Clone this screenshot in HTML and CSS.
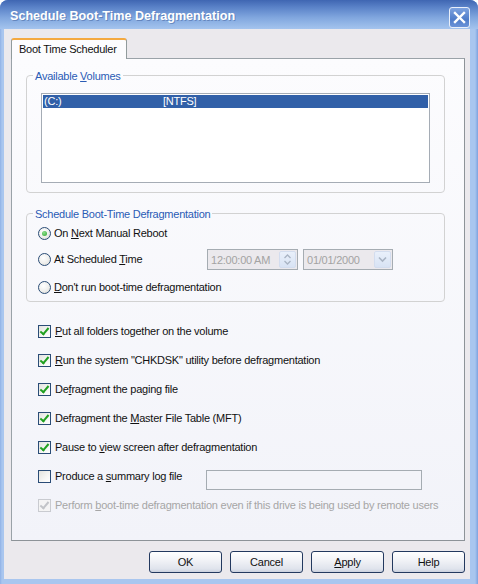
FILE: index.html
```html
<!DOCTYPE html>
<html>
<head>
<meta charset="utf-8">
<title>Schedule Boot-Time Defragmentation</title>
<link rel="stylesheet" href="styles.css">
</head>
<body>
<div class="window">
  <div class="titlebar">
    <span class="title">Schedule Boot-Time Defragmentation</span>
    <div class="close" aria-label="Close">
      <svg width="13" height="13" viewBox="0 0 13 13"><path d="M2 2 L11 11 M11 2 L2 11" stroke="#fff" stroke-width="2.4" stroke-linecap="square" fill="none"/></svg>
    </div>
  </div>
  <div class="frame">
    <div class="client">
      <div class="tabs">
        <div class="tab active">Boot Time Scheduler</div>
      </div>
      <div class="panel">
        <fieldset class="group vol">
          <legend>Available <u>V</u>olumes</legend>
          <div class="group-body vol-body">
            <div class="listbox">
              <div class="lrow selected"><span class="col1">(C:)</span><span>[NTFS]</span></div>
            </div>
          </div>
        </fieldset>

        <fieldset class="group sched">
          <legend>Schedule Boot-Time Defragmentation</legend>
          <div class="group-body sched-body">
            <div class="opt r1">
              <span class="radio checked"></span>
              <span class="lbl">On <u>N</u>ext Manual Reboot</span>
            </div>
            <div class="opt r2">
              <span class="radio"></span>
              <span class="lbl fixed">At Scheduled <u>T</u>ime</span>
              <div class="field time">
                <span class="ftext">12:00:00 AM</span>
                <span class="spin">
                  <svg width="9" height="13" viewBox="0 0 9 13"><path d="M1.5 5 L4.5 2 L7.5 5" stroke="#a9b4c4" stroke-width="1.3" fill="none"/><path d="M1.5 8 L4.5 11 L7.5 8" stroke="#a9b4c4" stroke-width="1.3" fill="none"/></svg>
                </span>
              </div>
              <div class="field date">
                <span class="ftext">01/01/2000</span>
                <span class="drop">
                  <svg width="9" height="7" viewBox="0 0 9 7"><path d="M1 1.5 L4.5 5 L8 1.5" stroke="#a9b4c4" stroke-width="1.6" fill="none"/></svg>
                </span>
              </div>
            </div>
            <div class="opt r3">
              <span class="radio"></span>
              <span class="lbl"><u>D</u>on't run boot-time defragmentation</span>
            </div>
          </div>
        </fieldset>

        <div class="checks">
          <div class="chk"><span class="box on"></span><span class="lbl"><u>P</u>ut all folders together on the volume</span></div>
          <div class="chk"><span class="box on"></span><span class="lbl"><u>R</u>un the system "CHKDSK" utility before defragmentation</span></div>
          <div class="chk"><span class="box on"></span><span class="lbl">De<u>f</u>ragment the paging file</span></div>
          <div class="chk"><span class="box on"></span><span class="lbl">Defragment the <u>M</u>aster File Table (MFT)</span></div>
          <div class="chk"><span class="box on"></span><span class="lbl">Pause to <u>v</u>iew screen after defragmentation</span></div>
          <div class="chk"><span class="box"></span><span class="lbl fixed2">Produce a <u>s</u>ummary log file</span><div class="logfield"></div></div>
          <div class="chk disabled"><span class="box on"></span><span class="lbl">Perform <u>b</u>oot-time defragmentation even if this drive is being used by remote users</span></div>
        </div>
      </div>
      <div class="buttons">
        <div class="btn">OK</div>
        <div class="btn">Cancel</div>
        <div class="btn"><u>A</u>pply</div>
        <div class="btn">Help</div>
      </div>
    </div>
  </div>
</div>
</body>
</html>
```

FILE: styles.css
```css
* { box-sizing: border-box; }
html, body { margin: 0; padding: 0; }
body {
  width: 478px;
  height: 584px;
  overflow: hidden;
  background: #ffffff;
  font-family: "Liberation Sans", Arial, sans-serif;
  font-size: 11px;
  letter-spacing: -0.24px;
  color: #111;
}
u { text-decoration: underline; text-underline-offset: 1px; }

.window {
  width: 478px;
  height: 584px;
  display: flex;
  flex-direction: column;
  border-radius: 8px 8px 0 0;
  background: #8fb1e6;
  box-shadow: inset 0 0 0 1px #6a8fd0;
  overflow: hidden;
}

.titlebar {
  height: 29px;
  flex: none;
  display: flex;
  align-items: center;
  justify-content: space-between;
  padding: 0 8px 0 10px;
  background: linear-gradient(to bottom, #3f66b2 0%, #5a82c8 25%, #80a6de 60%, #a4c4ee 100%);
  border-radius: 7px 7px 0 0;
}
.title {
  color: #fff;
  font-weight: bold;
  font-size: 12.6px;
  letter-spacing: 0;
  text-shadow: 1px 1px 0 rgba(30, 60, 120, 0.35);
  margin-top: 2px;
}
.close {
  width: 21px;
  height: 21px;
  margin-top: 5px;
  border: 1px solid #e9effa;
  border-radius: 3px;
  background: linear-gradient(to bottom, #7ea3e0, #4f7cc9 60%, #6b93d8);
  display: flex;
  align-items: center;
  justify-content: center;
}

.frame {
  flex: 1;
  display: flex;
  padding: 0 8px 5px 4px;
  background: linear-gradient(to right, #8fb1e6 0, #a9c6ef 2px, #a9c6ef calc(100% - 3px), #7ea2de 100%);
}
.client {
  flex: 1;
  background: #ebe9ed;
  padding: 9px 5px 0 7px;
  display: flex;
  flex-direction: column;
}

.tabs { display: flex; height: 20px; position: relative; z-index: 1; }
.tab {
  width: 116px;
  height: 21px;
  border: 1px solid #919b9c;
  border-bottom: none;
  border-top: 2px solid #f4a93f;
  border-radius: 3px 3px 0 0;
  background: #fcfcfe;
  padding: 3px 0 0 7px;
  line-height: 13px;
  white-space: nowrap;
}

.panel {
  width: 454px;
  height: 483px;
  border: 1px solid #9aa2a8;
  border-right-color: #8d9398;
  border-bottom-color: #8d9398;
  background: linear-gradient(to bottom, #fcfcfe, #f2f3f9);
  padding: 8px 0 0 14px;
  display: flex;
  flex-direction: column;
  align-items: flex-start;
}

.group {
  margin: 0;
  padding: 0;
  width: 419px;
  border: 1px solid #d2d2d2;
  border-radius: 4px;
  min-inline-size: 0;
}
.group legend {
  padding: 3px 2px 0 2px;
  margin-left: 6px;
  color: #2a5bb5;
  line-height: 13px;
  font-size: 11px;
}
.vol-body { padding: 10px 14px 9px 14px; }
.listbox {
  height: 90px;
  border: 1px solid #a5acb5;
  background: #fff;
  padding: 1px;
}
.lrow { height: 13px; line-height: 13px; display: flex; padding-left: 1px; }
.lrow.selected { background: #3160a8; color: #fff; }
.col1 { width: 119px; }

.sched { margin-top: 12px; }
.sched-body { padding: 3px 10px 5px 11px; display: flex; flex-direction: column; }
.opt { display: flex; align-items: center; }
.r1 { height: 18px; }
.r2 { height: 21px; margin-top: 7px; }
.r3 { height: 18px; margin-top: 8px; }
.radio {
  width: 13px;
  height: 13px;
  border-radius: 50%;
  border: 1px solid #2a4c76;
  background: radial-gradient(circle at 40% 35%, #ffffff 0%, #f0f0ee 50%, #d8d8d2 100%);
  flex: none;
  display: flex;
  align-items: center;
  justify-content: center;
}
.radio.checked::after {
  content: "";
  width: 5px;
  height: 5px;
  border-radius: 50%;
  background: radial-gradient(circle at 40% 35%, #8de08d, #2fa52f);
}
.opt .lbl { margin-left: 3px; line-height: 13px; white-space: nowrap; }
.opt .lbl.fixed { width: 153px; flex: none; }

.field {
  height: 21px;
  border: 1px solid #a5acb2;
  background: #ebe9ed;
  display: flex;
  align-items: center;
  justify-content: space-between;
  color: #a3a3a3;
  padding: 0 1px 0 3px;
}
.field.time { width: 91px; }
.field.date { width: 90px; margin-left: 5px; }
.spin, .drop {
  width: 17px;
  height: 17px;
  background: linear-gradient(to bottom, #e9f0fb, #d8e3f4);
  border: 1px solid #d3ddef;
  border-radius: 2px;
  display: flex;
  align-items: center;
  justify-content: center;
}

.checks { margin-top: 15px; padding-left: 12px; display: flex; flex-direction: column; }
.chk { height: 29px; display: flex; align-items: center; }
.box {
  width: 13px;
  height: 13px;
  border: 1px solid #2a4c76;
  background: linear-gradient(135deg, #e3e3de 0%, #f6f6f4 60%, #ffffff 100%);
  flex: none;
  position: relative;
}
.box.on::after {
  content: "";
  position: absolute;
  left: 2px;
  top: 0px;
  width: 3px;
  height: 7px;
  border: solid #21a121;
  border-width: 0 2px 2px 0;
  transform: translate(1px, 0) rotate(40deg);
}
.chk .lbl { margin-left: 4px; line-height: 13px; white-space: nowrap; }
.chk .lbl.fixed2 { width: 151px; flex: none; }
.logfield {
  width: 216px;
  height: 20px;
  margin-top: 6px;
  border: 1px solid #a5acb2;
  background: #f3f4f9;
}
.chk.disabled { color: #a6a6a6; }
.chk.disabled .box { border-color: #c9cbd0; background: #f4f4f4; }
.chk.disabled .box.on::after { border-color: #c2c4c8; }

.buttons {
  width: 454px;
  margin-top: 10px;
  display: flex;
  justify-content: flex-end;
  gap: 8px;
}
.btn {
  width: 73px;
  height: 22px;
  border: 1px solid #23395f;
  border-radius: 3px;
  background: linear-gradient(to bottom, #ffffff 0%, #f2f3f7 40%, #dfe3ec 85%, #c9d0de 100%);
  display: flex;
  align-items: center;
  justify-content: center;
  line-height: 13px;
}
```
